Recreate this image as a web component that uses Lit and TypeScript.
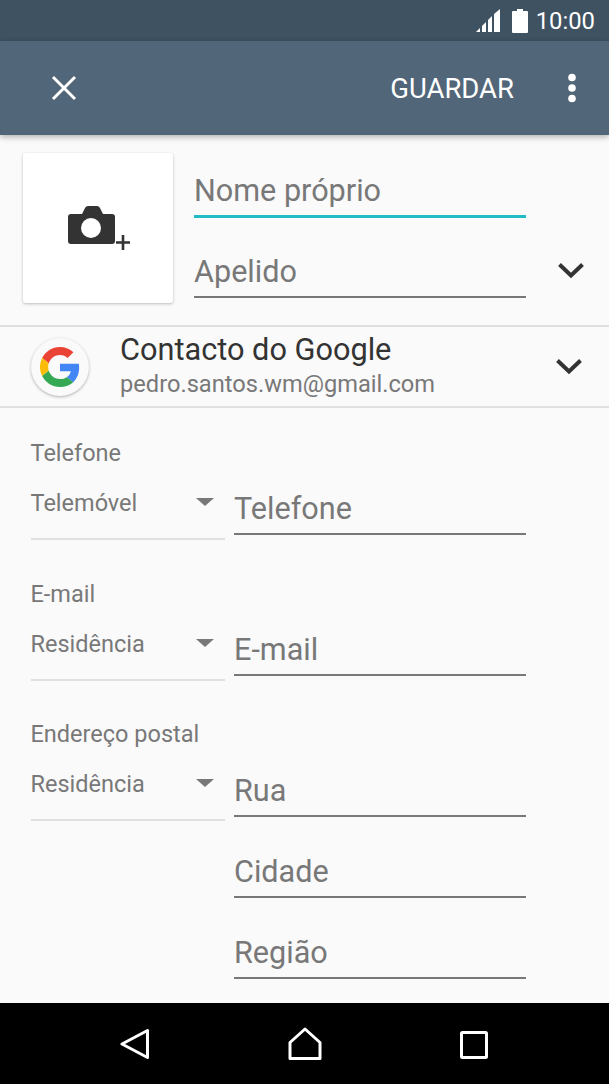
import { LitElement, html, css } from "lit";
import { customElement } from "lit/decorators.js";

const chevron = html`<svg width="30" height="20" viewBox="0 0 30 20"><path d="M3.5 4.5 15 15.5 26.5 4.5" fill="none" stroke="#333" stroke-width="4"/></svg>`;

@customElement("app-root")
export class AppRoot extends LitElement {
  static override styles = css`
    :host {
      display: flex;
      flex-direction: column;
      width: 609px;
      height: 1084px;
      overflow: hidden;
      background: #fafafa;
      font-family: Roboto, sans-serif;
      color: #787878;
    }
    .status {
      height: 41px;
      flex: none;
      background: #3f5262;
      display: flex;
      align-items: center;
      justify-content: flex-end;
      padding-right: 14px;
      box-sizing: border-box;
      color: #fff;
      font-size: 23.8px;
      gap: 8px;
    }
    .status svg { display: block; }
    .status .signal { margin-right: 3px; }
    .toolbar {
      height: 94px;
      flex: none;
      background: #526679;
      display: flex;
      align-items: center;
      color: #fff;
      box-shadow: 0 2px 6px rgba(0, 0, 0, 0.3);
      position: relative;
      padding: 0 32px 0 50px;
    }
    .toolbar .save {
      margin-left: auto;
      margin-right: 53px;
      font-size: 27.5px;
    }
    .head {
      height: 192px;
      flex: none;
      display: flex;
      box-sizing: border-box;
      padding: 18px 0 0 23px;
      border-bottom: 2px solid #e0e0e0;
    }
    .photo {
      width: 150px;
      height: 150px;
      background: #fff;
      border-radius: 3px;
      box-shadow: 0 1px 3px rgba(0, 0, 0, 0.25);
      display: flex;
      align-items: center;
      justify-content: center;
      margin-right: 21px;
    }
    .photo svg { margin-left: 2px; }
    .names { width: 332px; padding-top: 1px; }
    .field {
      height: 80px;
      box-sizing: border-box;
      display: flex;
      align-items: flex-end;
      font-size: 30.6px;
      border-bottom: 2px solid #787878;
      padding-bottom: 5px;
      line-height: 38px;
    }
    .field.first { height: 64px; border-bottom: 3px solid #22bcc6; }
    .chev { align-self: flex-start; margin: 107px 0 0 30px; }
    .account {
      height: 81px;
      flex: none;
      display: flex;
      align-items: center;
      box-sizing: border-box;
      padding-left: 31px;
      border-bottom: 2px solid #e0e0e0;
    }
    .g {
      width: 58px;
      height: 58px;
      border-radius: 50%;
      background: #fafafa;
      box-shadow: 0 1px 3px rgba(0, 0, 0, 0.3);
      display: flex;
      align-items: center;
      justify-content: center;
      margin-right: 31px;
      flex: none;
    }
    .acc-text { flex: 1; margin-bottom: 3px; }
    .acc-name { font-size: 30.7px; color: #333; line-height: 39px; }
    .acc-mail { font-size: 23.65px; line-height: 31px; }
    .account .chev2 { margin: 3px 25px 0 0; }
    .form { flex: 1; padding: 0 0 0 31px; }
    .section { height: 140.6px; box-sizing: border-box; padding-top: 30px; }
    .section.last { height: 127.8px; }
    .section.last .input { height: 68px; padding-top: 23px; }
    .label { font-size: 23.5px; line-height: 30px; margin-left: -0.5px; }
    .row { display: flex; }
    .select {
      width: 194px;
      height: 72px;
      flex: none;
      box-sizing: border-box;
      border-bottom: 2px solid #e0e0e0;
      display: flex;
      justify-content: space-between;
      font-size: 23.5px;
      line-height: 30px;
      padding: 20px 11px 0 0;
      margin-right: 9px;
      text-indent: -0.5px;
    }
    .caret {
      width: 0;
      height: 0;
      margin-top: 10px;
      border-left: 9px solid transparent;
      border-right: 9px solid transparent;
      border-top: 8px solid #787878;
    }
    .input {
      width: 292px;
      height: 67px;
      box-sizing: border-box;
      border-bottom: 2px solid #787878;
      font-size: 30.6px;
      line-height: 38px;
      padding-top: 22px;
    }
    .extra { margin: 14px 0 0 203px; }
    .nav {
      height: 81px;
      flex: none;
      background: #000;
      display: flex;
      align-items: center;
      justify-content: space-between;
      padding: 0 121px 0 120px;
    }
    .nav svg { display: block; }
    .nav .recent { margin-top: 3px; }
  `;

  override render() {
    return html`
      <div class="status">
        <svg class="signal" width="25" height="23" viewBox="0 0 25 23"><path d="M0 23 4 19V23ZM6 23V17L10 13V23ZM12 23V11L16 7V23ZM18 23V5L24 0V23Z" fill="#fff"/></svg>
        <svg width="16" height="24" viewBox="0 0 16 24"><path d="M5 0H11V2H15a1 1 0 0 1 1 1V23a1 1 0 0 1-1 1H1a1 1 0 0 1-1-1V3a1 1 0 0 1 1-1H5Z" fill="#fff"/></svg>
        <span>10:00</span>
      </div>
      <div class="toolbar">
        <svg width="28" height="28" viewBox="0 0 28 28"><path d="M3 3 25 25M25 3 3 25" stroke="#fff" stroke-width="3" fill="none"/></svg>
        <span class="save">GUARDAR</span>
        <svg width="10" height="30" viewBox="0 0 10 30"><circle cx="5" cy="4.500" r="3.800" fill="#fff"/><circle cx="5" cy="15" r="3.800" fill="#fff"/><circle cx="5" cy="25.500" r="3.800" fill="#fff"/></svg>
      </div>
      <div class="head">
        <div class="photo">
          <svg width="62" height="44" viewBox="0 0 62 44">
            <path d="M14 8 17 2Q18 0 20 0H29Q31 0 32 2L35 8H44Q47 8 47 11V35Q47 38 44 38H3Q0 38 0 35V11Q0 8 3 8Z" fill="#333"/>
            <circle cx="23" cy="22" r="10" fill="#fff"/>
            <path d="M48 36.500H62M55 29V44" stroke="#333" stroke-width="2.600" fill="none"/>
          </svg>
        </div>
        <div class="names">
          <div class="field first">Nome próprio</div>
          <div class="field">Apelido</div>
        </div>
        <div class="chev">${chevron}</div>
      </div>
      <div class="account">
        <div class="g">
          <svg width="40" height="40" viewBox="0 0 48 48">
            <path fill="#EA4335" d="M24 9.500c3.540 0 6.710 1.220 9.210 3.600l6.850-6.850C35.900 2.380 30.470 0 24 0 14.620 0 6.510 5.380 2.560 13.220l7.980 6.190C12.430 13.720 17.740 9.500 24 9.500z"/>
            <path fill="#4285F4" d="M46.980 24.550c0-1.570-.15-3.090-.38-4.550H24v9.020h12.940c-.58 2.960-2.260 5.480-4.780 7.180l7.730 6c4.510-4.180 7.090-10.360 7.090-17.650z"/>
            <path fill="#FBBC05" d="M10.530 28.590c-.48-1.450-.76-2.990-.76-4.590s.27-3.140.76-4.590l-7.980-6.190C.92 16.460 0 20.120 0 24c0 3.880.92 7.540 2.560 10.780l7.970-6.190z"/>
            <path fill="#34A853" d="M24 48c6.480 0 11.930-2.130 15.890-5.810l-7.730-6c-2.150 1.450-4.920 2.300-8.160 2.300-6.260 0-11.570-4.220-13.470-9.910l-7.980 6.190C6.510 42.620 14.620 48 24 48z"/>
          </svg>
        </div>
        <div class="acc-text">
          <div class="acc-name">Contacto do Google</div>
          <div class="acc-mail">pedro.santos.wm@gmail.com</div>
        </div>
        <div class="chev2">${chevron}</div>
      </div>
      <div class="form">
        <div class="section">
          <div class="label">Telefone</div>
          <div class="row">
            <div class="select">Telemóvel<span class="caret"></span></div>
            <div class="input">Telefone</div>
          </div>
        </div>
        <div class="section">
          <div class="label">E-mail</div>
          <div class="row">
            <div class="select">Residência<span class="caret"></span></div>
            <div class="input">E-mail</div>
          </div>
        </div>
        <div class="section last">
          <div class="label">Endereço postal</div>
          <div class="row">
            <div class="select">Residência<span class="caret"></span></div>
            <div class="input">Rua</div>
          </div>
        </div>
        <div class="input extra">Cidade</div>
        <div class="input extra">Região</div>
      </div>
      <div class="nav">
        <svg width="30" height="32" viewBox="0 0 30 32"><path d="M27.500 2.500V29.500L2 16Z" fill="none" stroke="#fff" stroke-width="3" stroke-linejoin="round"/></svg>
        <svg width="34" height="34" viewBox="0 0 34 34"><path d="M17 2 32 15.500V31.500H2V15.500Z" fill="none" stroke="#fff" stroke-width="3" stroke-linejoin="round"/></svg>
        <svg class="recent" width="28" height="28" viewBox="0 0 28 28"><rect x="1.500" y="1.500" width="25" height="25" rx="1" fill="none" stroke="#fff" stroke-width="3"/></svg>
      </div>
    `;
  }
}
